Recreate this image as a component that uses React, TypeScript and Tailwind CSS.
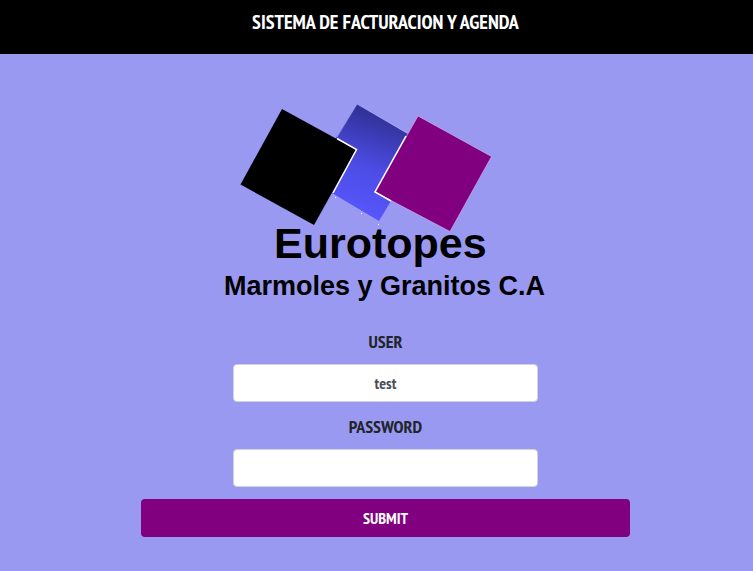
function Logo() {
  return (
    <svg
      viewBox="224 100 324 206"
      className="block w-[324px]"
      role="img"
      aria-label="Eurotopes Marmoles y Granitos C.A"
    >
      <defs>
        <linearGradient id="blueTile" x1="385" y1="118" x2="355" y2="210" gradientUnits="userSpaceOnUse">
          <stop offset="0" stopColor="#32329a" />
          <stop offset="0.55" stopColor="#4c4ce6" />
          <stop offset="1" stopColor="#5656fa" />
        </linearGradient>
      </defs>
      <polygon points="357,104 425,144 379,221 310,180" fill="url(#blueTile)" />
      <polyline points="337,137 357,104 407,133" fill="none" stroke="#b4b4f4" strokeWidth="0.6" />
      <polygon points="282,109 356,149.500 314,225 240.500,184.500" fill="#000" />
      <polyline points="337,138.500 356.500,149.500 333,193" fill="none" stroke="#fff" strokeWidth="1.500" />
      <polygon points="418,116 491.500,156.500 450,231.500 375,192" fill="#800080" stroke="#d9b8ea" strokeWidth="0.6" />
      <polyline points="406,136 375,192 391,201" fill="none" stroke="#fff" strokeWidth="1.500" />
      <g fill="#000" fontWeight="700" className="font-['Liberation_Sans',Arial,sans-serif]">
        <text x="274" y="258" fontSize="43">Eurotopes</text>
        <text x="224" y="295" fontSize="27">Marmoles y Granitos C.A</text>
      </g>
      <g fill="#fff">
        <rect x="335" y="197" width="1" height="1" />
        <rect x="361" y="213" width="1" height="1" />
        <rect x="378" y="224" width="1" height="1" />
      </g>
    </svg>
  );
}

export default function App() {
  return (
    <div className="min-h-screen bg-[#9999f2] font-['PT_Sans_Narrow','Liberation_Sans_Narrow','Open_Sans',sans-serif] text-[#212529]">
      <header className="bg-black pt-2 pb-[18px] pl-[18px] text-center">
        <h1 className="text-xl leading-7 font-bold text-white">SISTEMA DE FACTURACION Y AGENDA</h1>
      </header>
      <main className="flex flex-col items-center pt-[46px] pb-8 pl-[18px]">
        <Logo />
        <form className="mt-[23px] flex w-full max-w-[489px] flex-col items-center" onSubmit={(e) => e.preventDefault()}>
          <label htmlFor="user" className="mb-2.5 text-lg leading-[25px] font-bold">
            USER
          </label>
          <input
            id="user"
            type="text"
            defaultValue="test"
            className="mb-3 h-[38px] w-full max-w-[305px] rounded border border-[#ced4da] bg-white px-3 text-center text-base font-bold text-[#495057]"
          />
          <label htmlFor="password" className="mb-2.5 text-lg leading-[25px] font-bold">
            PASSWORD
          </label>
          <input
            id="password"
            type="password"
            className="mb-3 h-[38px] w-full max-w-[305px] rounded border border-[#ced4da] bg-white px-3 text-center text-base font-bold text-[#495057]"
          />
          <button type="submit" className="h-[38px] w-full rounded bg-[#800080] text-base font-bold text-white">
            SUBMIT
          </button>
        </form>
      </main>
    </div>
  );
}
